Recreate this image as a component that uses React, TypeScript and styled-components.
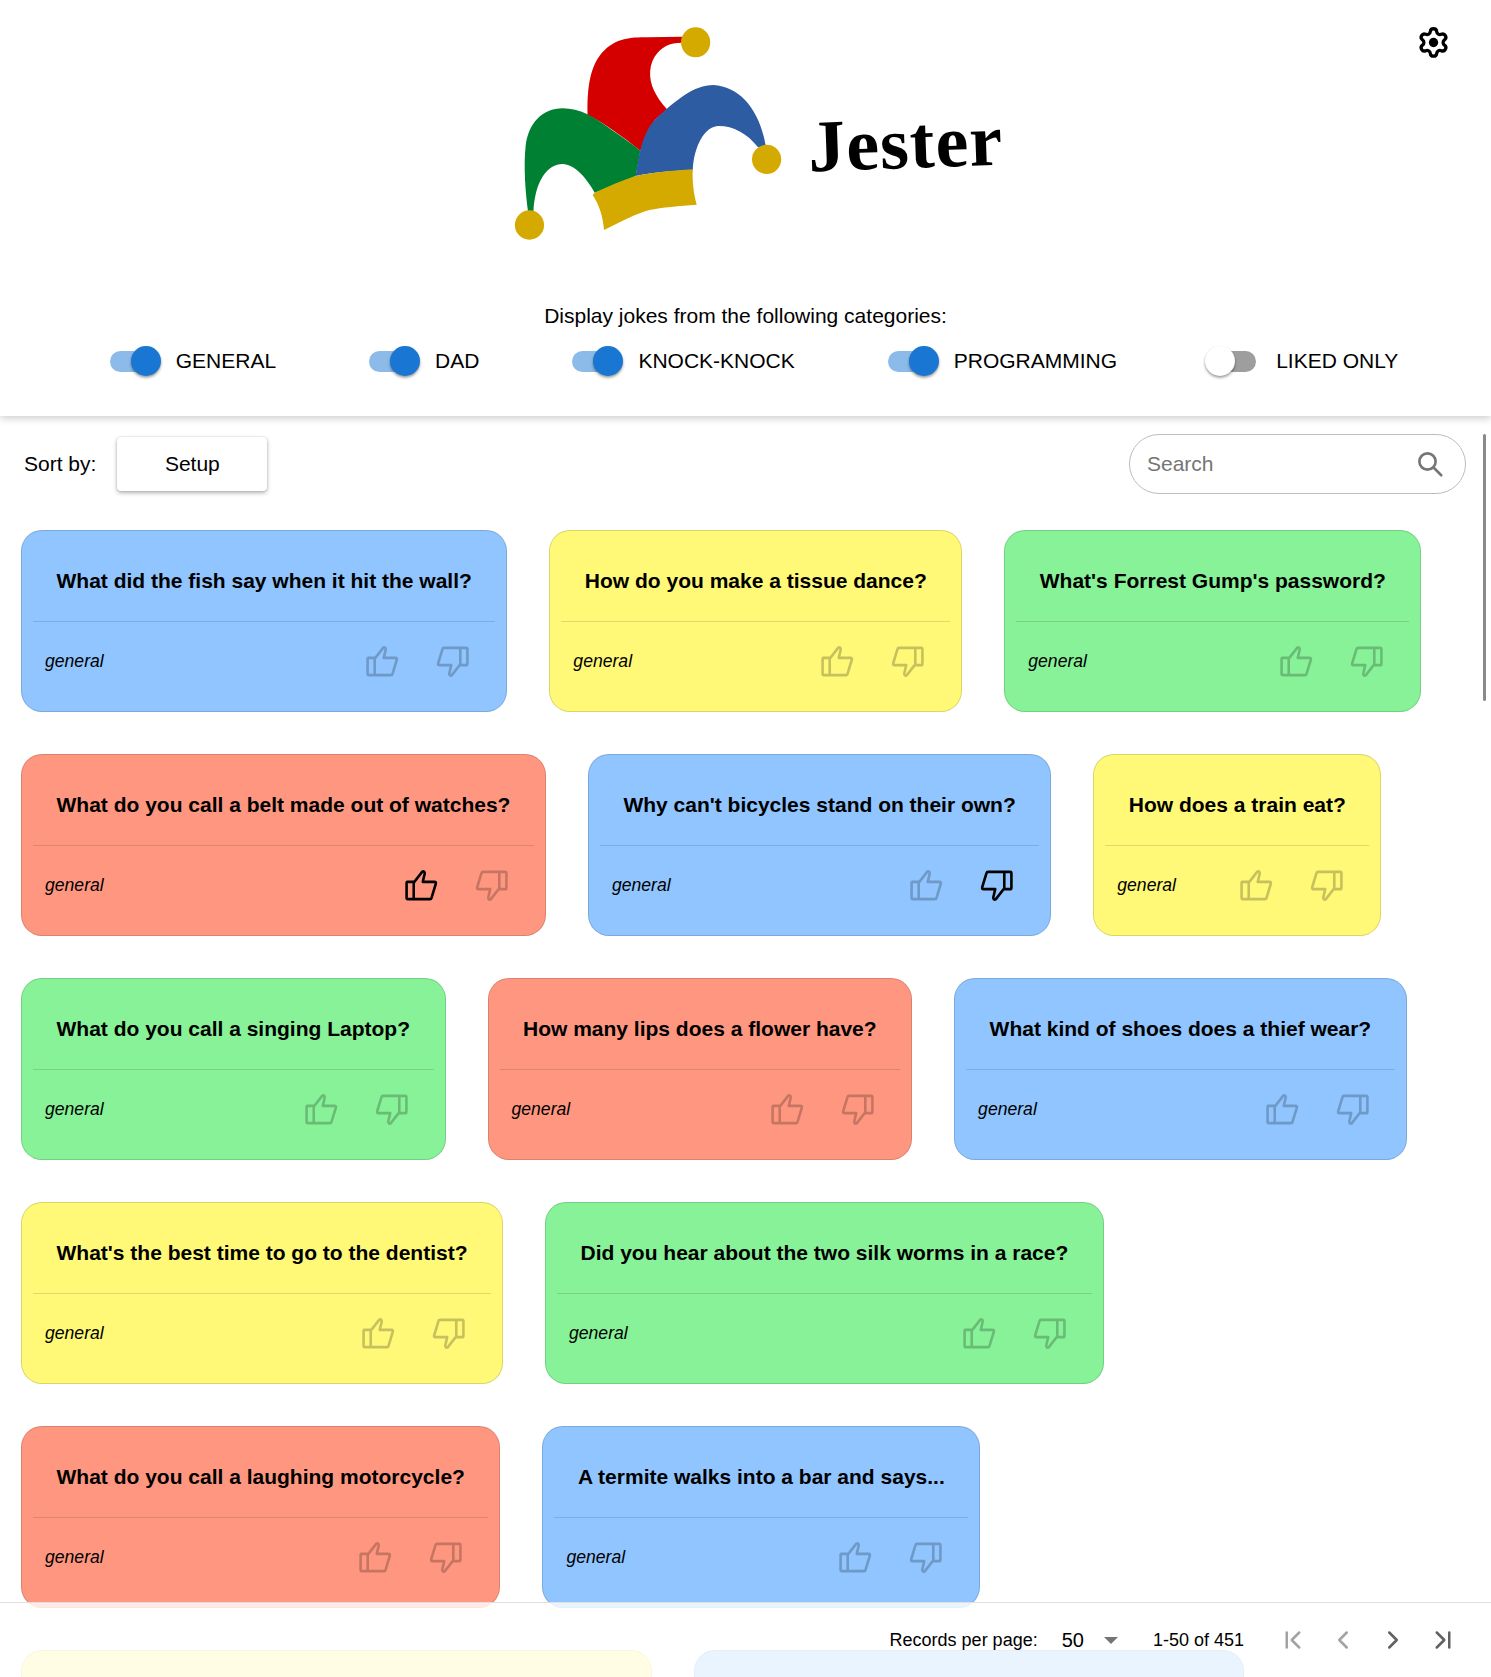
import { ChevronFirst, ChevronLast, ChevronLeft, ChevronRight } from "lucide-react";
import styled, { createGlobalStyle } from "styled-components";

const GlobalStyle = createGlobalStyle`
  html, body {
    margin: 0;
    height: 100%;
    overflow: hidden;
    background: white;
    font-family: "Liberation Sans", Arial, sans-serif;
    color: black;
  }
  #root {
    height: 100%;
  }
`;

const colors = {
  blue: "#90c5ff",
  yellow: "#fff977",
  green: "#88f298",
  red: "#ff9780",
};

type CardColor = keyof typeof colors;

const Page = styled.div`
  display: flex;
  flex-direction: column;
  height: 100%;
  position: relative;
`;

const Header = styled.header`
  position: relative;
  z-index: 2;
  flex: 0 0 416px;
  box-sizing: border-box;
  display: flex;
  flex-direction: column;
  align-items: center;
  background: white;
  box-shadow: 0 2px 8px rgba(0, 0, 0, 0.22);
`;

const LogoRow = styled.div`
  display: flex;
  align-items: center;
  gap: 25px;
  height: 260px;
  padding-left: 24px;
`;

const JesterText = styled.span`
  font-family: "Liberation Serif", serif;
  font-weight: 700;
  font-size: 74px;
  line-height: 1;
  letter-spacing: 1px;
  margin-top: 26px;
  transform: rotate(-2deg);
`;

const SettingsButton = styled.button`
  position: absolute;
  top: 24px;
  right: 40px;
  width: 36px;
  height: 36px;
  padding: 0;
  border: 0;
  background: none;
  display: flex;
  align-items: center;
  justify-content: center;
`;

const Heading = styled.div`
  font-size: 21px;
  line-height: 23px;
  margin-top: 44px;
`;

const ToggleRow = styled.div`
  display: flex;
  justify-content: center;
  gap: 93px;
  margin-top: 19px;
  padding-left: 17px;
`;

const ToggleItem = styled.label`
  display: flex;
  align-items: center;
  gap: 15px;
  font-size: 21px;
  height: 30px;
`;

const Track = styled.span<{ $on: boolean }>`
  position: relative;
  display: block;
  width: 46px;
  height: 21px;
  margin-right: 5px;
  border-radius: 11px;
  background: ${(p) => (p.$on ? "#8cbbe9" : "#9e9e9e")};
`;

const Thumb = styled.span<{ $on: boolean }>`
  position: absolute;
  top: -5px;
  ${(p) => (p.$on ? "right: -5px;" : "left: -5px;")}
  width: 30px;
  height: 30px;
  border-radius: 50%;
  background: ${(p) => (p.$on ? "#1976d2" : "white")};
  box-shadow: 0 2px 3px rgba(0, 0, 0, 0.3), 0 1px 2px rgba(0, 0, 0, 0.15);
`;

const Main = styled.main`
  position: relative;
  flex: 1;
  min-height: 0;
  overflow: hidden;
`;

const Toolbar = styled.div`
  display: flex;
  align-items: center;
  justify-content: space-between;
  height: 114px;
  padding: 0 25px 18px 24px;
  box-sizing: border-box;
`;

const SortGroup = styled.div`
  display: flex;
  align-items: center;
  gap: 21px;
  font-size: 21px;
`;

const SortButton = styled.button`
  width: 150px;
  height: 54px;
  border: 0;
  border-radius: 4px;
  background: white;
  font-family: inherit;
  font-size: 21px;
  color: black;
  box-shadow: 0 2px 4px rgba(0, 0, 0, 0.3), 0 0 2px rgba(0, 0, 0, 0.15);
`;

const SearchBox = styled.div`
  display: flex;
  align-items: center;
  justify-content: space-between;
  width: 337px;
  height: 60px;
  box-sizing: border-box;
  padding: 0 20px 0 17px;
  border: 1px solid #bdbdbd;
  border-radius: 30px;
  font-size: 21px;
  color: #757575;
`;

const CardGrid = styled.div`
  display: flex;
  flex-wrap: wrap;
  align-items: flex-start;
  gap: 42px 42px;
  padding: 0 60px 0 21px;
`;

const Card = styled.article<{ $color: CardColor }>`
  box-sizing: border-box;
  height: 182px;
  border: 1px solid rgba(0, 0, 0, 0.14);
  border-radius: 21px;
  background: ${(p) => colors[p.$color]};
`;

const OffscreenCard = styled(Card)<{ $width: number }>`
  width: ${(p) => p.$width}px;
`;

const CardTitle = styled.h2`
  margin: 0;
  height: 90px;
  box-sizing: border-box;
  padding: 10px 34.5px 0;
  display: flex;
  align-items: center;
  font-size: 21px;
  font-weight: 700;
  white-space: nowrap;
`;

const Divider = styled.hr`
  margin: 0 11px;
  border: 0;
  border-top: 1px solid rgba(0, 0, 0, 0.12);
`;

const CardFooter = styled.div`
  display: flex;
  align-items: center;
  justify-content: space-between;
  height: 78px;
  padding: 0 36px 0 23px;
`;

const Category = styled.span`
  font-style: italic;
  font-size: 17.6px;
`;

const Votes = styled.div`
  display: flex;
  gap: 37px;
`;

const ThumbSvg = styled.svg<{ $active: boolean; $down?: boolean }>`
  display: block;
  width: 34px;
  height: 33px;
  fill: none;
  stroke: black;
  stroke-width: 8;
  stroke-linejoin: round;
  stroke-linecap: round;
  opacity: ${(p) => (p.$active ? 1 : 0.22)};
  transform: ${(p) => (p.$down ? "rotate(180deg)" : "none")};
`;

const Pagination = styled.footer`
  position: absolute;
  left: 0;
  right: 0;
  bottom: 0;
  height: 75px;
  box-sizing: border-box;
  display: flex;
  align-items: center;
  justify-content: flex-end;
  padding-right: 23px;
  border-top: 1px solid #e0e0e0;
  background: rgba(255, 255, 255, 0.8);
  font-size: 18px;
`;

const PerPage = styled.span`
  font-size: 20px;
  margin-left: 24px;
`;

const Caret = styled.span`
  width: 0;
  height: 0;
  margin: 0 35px 0 20px;
  border-left: 7px solid transparent;
  border-right: 7px solid transparent;
  border-top: 7px solid #757575;
`;

const PageButton = styled.button<{ $enabled: boolean }>`
  width: 50px;
  height: 40px;
  padding: 0;
  border: 0;
  background: none;
  display: flex;
  align-items: center;
  justify-content: center;
  color: ${(p) => (p.$enabled ? "#616161" : "#a3a3a3")};
`;

const PageButtons = styled.div`
  display: flex;
  margin-left: 24px;
`;

const ScrollThumb = styled.div`
  position: absolute;
  z-index: 1;
  top: 434px;
  right: 5px;
  width: 3px;
  height: 267px;
  background: #8a8a8a;
  border-radius: 2px;
`;

const toggles = [
  { label: "GENERAL", on: true },
  { label: "DAD", on: true },
  { label: "KNOCK-KNOCK", on: true },
  { label: "PROGRAMMING", on: true },
  { label: "LIKED ONLY", on: false },
];

type Joke = { title: string; color: CardColor; vote?: "up" | "down" };

const jokes: Joke[] = [
  { title: "What did the fish say when it hit the wall?", color: "blue" },
  { title: "How do you make a tissue dance?", color: "yellow" },
  { title: "What's Forrest Gump's password?", color: "green" },
  { title: "What do you call a belt made out of watches?", color: "red", vote: "up" },
  { title: "Why can't bicycles stand on their own?", color: "blue", vote: "down" },
  { title: "How does a train eat?", color: "yellow" },
  { title: "What do you call a singing Laptop?", color: "green" },
  { title: "How many lips does a flower have?", color: "red" },
  { title: "What kind of shoes does a thief wear?", color: "blue" },
  { title: "What's the best time to go to the dentist?", color: "yellow" },
  { title: "Did you hear about the two silk worms in a race?", color: "green" },
  { title: "What do you call a laughing motorcycle?", color: "red" },
  { title: "A termite walks into a bar and says...", color: "blue" },
];

function HatLogo() {
  return (
    <svg width="271" height="260" viewBox="90 0 760 780" preserveAspectRatio="none">
      <path
        fill="#d40000"
        d="M302 345C300 260 310 190 350 150C385 115 420 112 470 112L568 110L568 128C530 128 510 140 490 170C470 205 475 250 495 285C505 305 515 315 525 328L490 360L450 452C400 410 350 370 302 345Z"
      />
      <path
        fill="#008033"
        d="M135 635C128 580 122 500 128 440C135 370 175 325 232 325C280 325 320 350 370 390C400 412 430 435 450 452L437 528L322 578C300 535 265 492 232 492C190 492 155 540 150 635Z"
      />
      <path
        fill="#2d5ca3"
        d="M437 528C445 470 455 400 490 360C550 300 600 255 655 255C730 260 785 330 802 440L780 442C750 400 710 378 670 378C630 378 600 440 597 510C540 512 480 518 437 528Z"
      />
      <path
        fill="#d4aa00"
        d="M316 585L322 578C360 560 400 540 437 528C480 518 540 512 597 508C595 545 600 585 608 614C560 618 510 622 475 630C440 640 390 668 348 690C345 650 335 615 316 585Z"
      />
      <ellipse fill="#d4aa00" cx="605" cy="127" rx="41" ry="45" />
      <ellipse fill="#d4aa00" cx="804" cy="478" rx="41" ry="44" />
      <ellipse fill="#d4aa00" cx="139" cy="675" rx="41" ry="44" />
    </svg>
  );
}

function GearIcon() {
  return (
    <svg width="33" height="33" viewBox="0 0 24 24" fill="none" stroke="black" strokeWidth="2.4" strokeLinejoin="round">
      <path d="M9.671 4.136a2.34 2.34 0 0 1 4.659 0 2.34 2.34 0 0 0 3.319 1.915 2.34 2.34 0 0 1 2.33 4.033 2.34 2.34 0 0 0 0 3.831 2.34 2.34 0 0 1-2.33 4.033 2.34 2.34 0 0 0-3.319 1.915 2.34 2.34 0 0 1-4.659 0 2.34 2.34 0 0 0-3.32-1.915 2.34 2.34 0 0 1-2.33-4.033 2.34 2.34 0 0 0 0-3.831A2.34 2.34 0 0 1 6.35 6.051a2.34 2.34 0 0 0 3.319-1.915" />
      <circle cx="12" cy="12" r="3.4" fill="black" stroke="none" />
    </svg>
  );
}

function SearchIcon() {
  return (
    <svg width="30" height="30" viewBox="0 0 24 24" fill="none" stroke="#757575" strokeWidth="2.1" strokeLinecap="round">
      <circle cx="10" cy="10" r="6.5" />
      <path d="M15 15l6 6" />
    </svg>
  );
}

function ThumbIcon({ active, down }: { active: boolean; down?: boolean }) {
  return (
    <ThumbSvg viewBox="190 85 105 95" $active={active} $down={down} preserveAspectRatio="none">
      <path d="M200 122H222L246 93Q254 90 254 98L248 122H284Q290 122 288 128L275 168Q274 172 270 172H202Q198 172 198 168V126Q198 122 200 122ZM220 122V172" />
    </ThumbSvg>
  );
}

export default function App() {
  return (
    <Page>
      <GlobalStyle />
      <Header>
        <LogoRow>
          <HatLogo />
          <JesterText>Jester</JesterText>
        </LogoRow>
        <SettingsButton>
          <GearIcon />
        </SettingsButton>
        <Heading>Display jokes from the following categories:</Heading>
        <ToggleRow>
          {toggles.map((t) => (
            <ToggleItem key={t.label}>
              <Track $on={t.on}>
                <Thumb $on={t.on} />
              </Track>
              {t.label}
            </ToggleItem>
          ))}
        </ToggleRow>
      </Header>
      <Main>
        <Toolbar>
          <SortGroup>
            Sort by:
            <SortButton>Setup</SortButton>
          </SortGroup>
          <SearchBox>
            Search
            <SearchIcon />
          </SearchBox>
        </Toolbar>
        <CardGrid>
          {jokes.map((joke) => (
            <Card key={joke.title} $color={joke.color}>
              <CardTitle>{joke.title}</CardTitle>
              <Divider />
              <CardFooter>
                <Category>general</Category>
                <Votes>
                  <ThumbIcon active={joke.vote === "up"} />
                  <ThumbIcon active={joke.vote === "down"} down />
                </Votes>
              </CardFooter>
            </Card>
          ))}
          {/* next row: only the top edge shows above the window bottom */}
          <OffscreenCard $color="yellow" $width={631} />
          <OffscreenCard $color="blue" $width={550} />
        </CardGrid>
        <Pagination>
          Records per page:
          <PerPage>50</PerPage>
          <Caret />
          1-50 of 451
          <PageButtons>
            <PageButton $enabled={false}>
              <ChevronFirst size={30} />
            </PageButton>
            <PageButton $enabled={false}>
              <ChevronLeft size={30} />
            </PageButton>
            <PageButton $enabled>
              <ChevronRight size={30} />
            </PageButton>
            <PageButton $enabled>
              <ChevronLast size={30} />
            </PageButton>
          </PageButtons>
        </Pagination>
      </Main>
      <ScrollThumb />
    </Page>
  );
}
